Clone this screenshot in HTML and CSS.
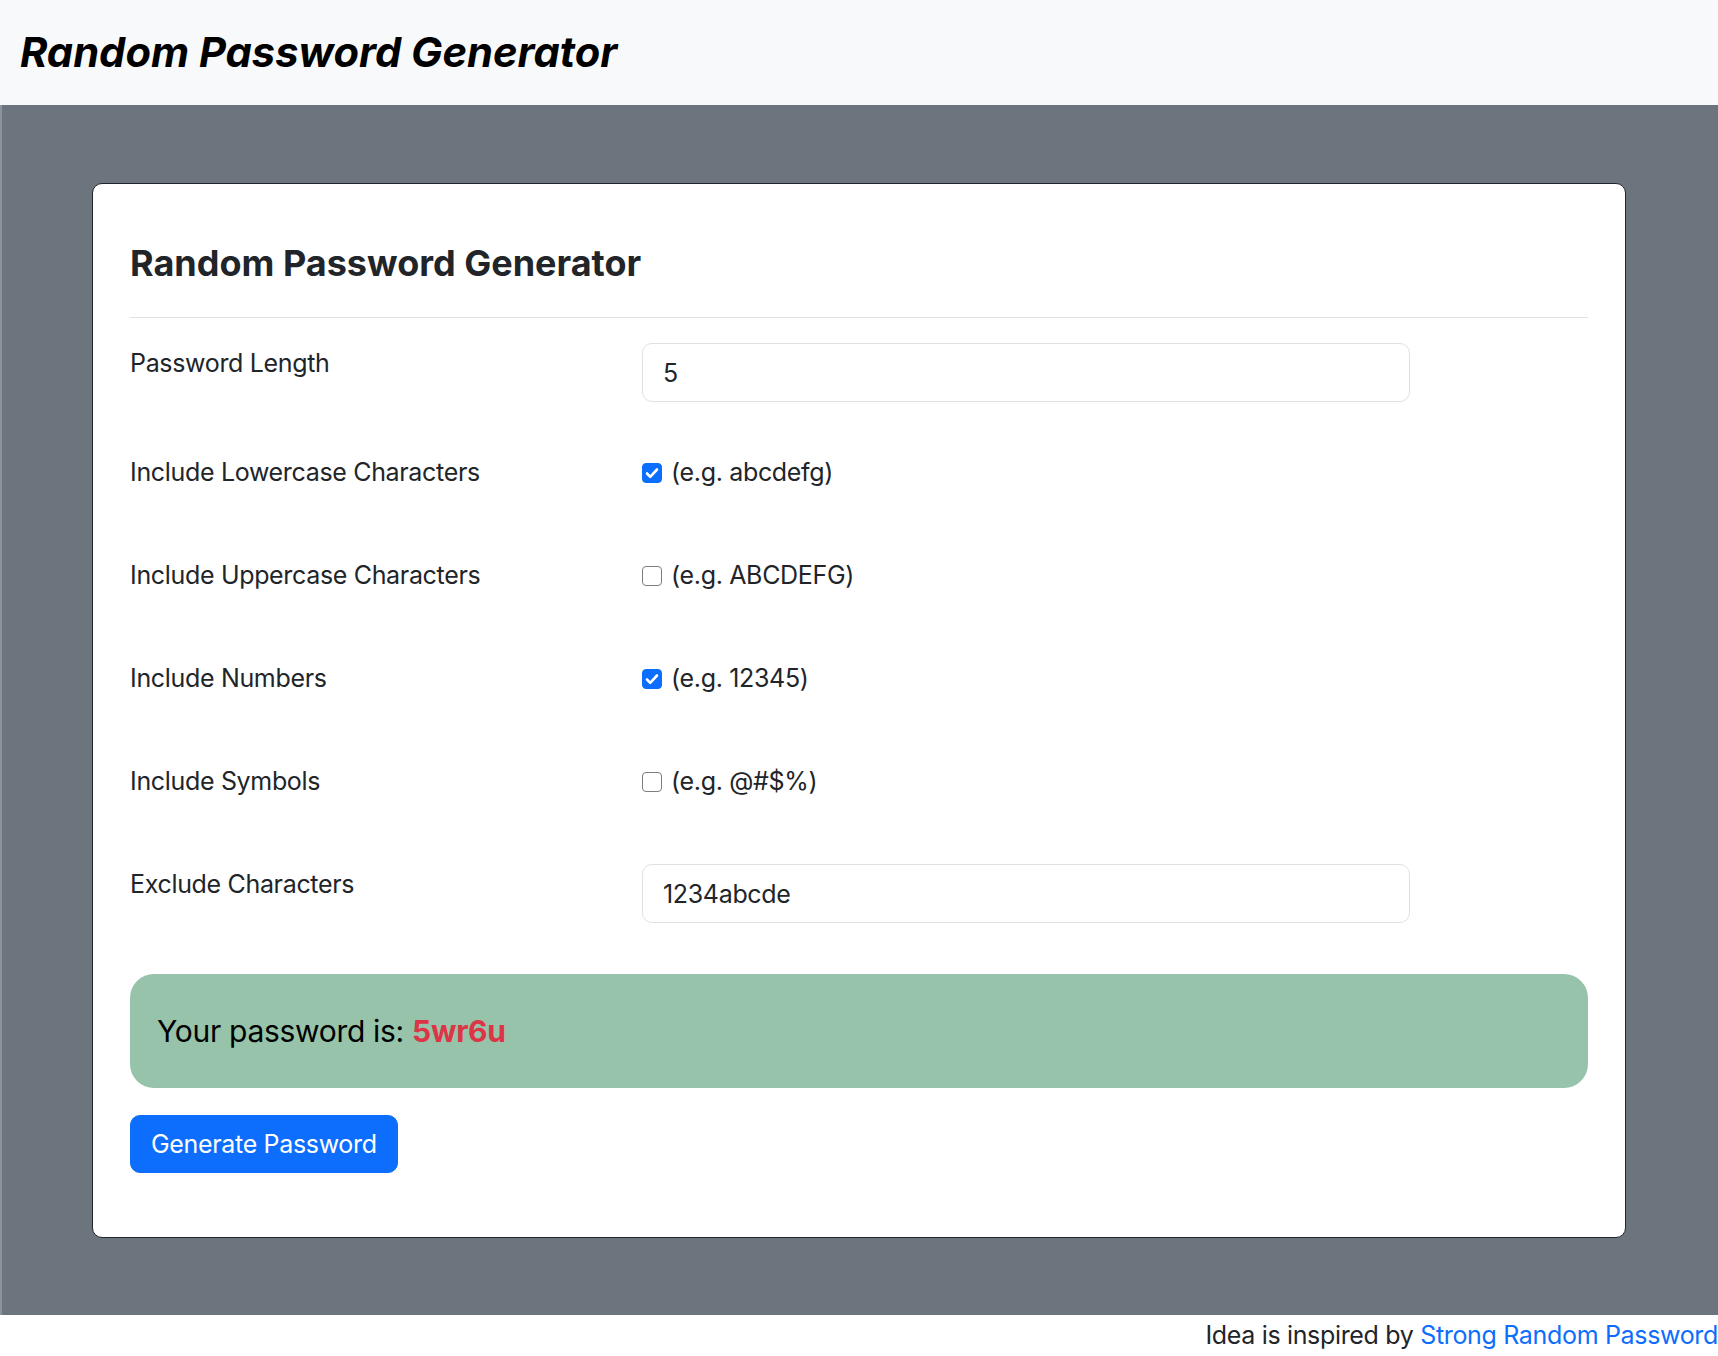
FILE: index.html
```html
<!DOCTYPE html>
<html lang="en">
<head>
<meta charset="utf-8">
<title>Random Password Generator</title>
<link rel="stylesheet" href="styles.css">
</head>
<body>
<header class="topbar">
  <h1 class="brand">Random Password Generator</h1>
</header>
<main class="stage">
  <section class="card">
    <h2 class="card-title">Random Password Generator</h2>
    <hr class="divider">
    <div class="field field-input">
      <label class="field-label" for="len">Password Length</label>
      <input class="text-input" id="len" type="text" value="5">
    </div>
    <div class="field field-check">
      <span class="field-label">Include Lowercase Characters</span>
      <label class="check"><input type="checkbox" checked><span>(e.g. abcdefg)</span></label>
    </div>
    <div class="field field-check">
      <span class="field-label">Include Uppercase Characters</span>
      <label class="check"><input type="checkbox"><span>(e.g. ABCDEFG)</span></label>
    </div>
    <div class="field field-check">
      <span class="field-label">Include Numbers</span>
      <label class="check"><input type="checkbox" checked><span>(e.g. 12345)</span></label>
    </div>
    <div class="field field-check">
      <span class="field-label">Include Symbols</span>
      <label class="check"><input type="checkbox"><span>(e.g. @#$%)</span></label>
    </div>
    <div class="field field-input field-last">
      <label class="field-label" for="excl">Exclude Characters</label>
      <input class="text-input" id="excl" type="text" value="1234abcde">
    </div>
    <div class="result">Your password is:&nbsp;<strong class="pw">5wr6u</strong></div>
    <button class="btn-generate" type="button">Generate Password</button>
  </section>
</main>
<footer class="credits">Idea is inspired by <a href="#">Strong Random Password</a></footer>
</body>
</html>
```

FILE: styles.css
```css
* { box-sizing: border-box; }

body {
  margin: 0;
  font-family: Inter, "Noto Sans", sans-serif;
  font-size: 25px;
  line-height: 1.5;
  letter-spacing: -0.33px;
  color: #212529;
  background: #fff;
}

.topbar {
  height: 105px;
  background: #f8f9fa;
  display: flex;
  align-items: center;
  padding-left: 20px;
}

.brand {
  margin: 0;
  font-size: 41.7px;
  font-weight: 700;
  font-style: italic;
  line-height: 1.2;
  letter-spacing: 0;
  color: #000;
}

.stage {
  background: #6c757d;
  border-left: 2px solid #8d9399;
  padding: 78px 92px 77px 90px;
}

.card {
  background: #fff;
  border: 1px solid #212529;
  border-radius: 10px;
  padding: 58px 37px 64px;
}

.card-title {
  margin: 0;
  font-size: 36px;
  font-weight: 700;
  line-height: 42px;
  letter-spacing: 0;
  color: #212529;
}

.divider {
  border: 0;
  border-top: 1px solid #dee2e6;
  margin: 33px 0 25px;
}

.field {
  display: grid;
  grid-template-columns: 512px 768px;
  align-items: start;
  margin-bottom: 50px;
}

.field-check { min-height: 53px; }
.field-last { margin-bottom: 51px; }

.field-label {
  padding-top: 2px;
  line-height: 37.5px;
}

.text-input {
  height: 59px;
  border: 1px solid #dee2e6;
  border-radius: 10px;
  padding: 0 20px;
  font-family: inherit;
  font-size: 25px;
  letter-spacing: inherit;
  color: #212529;
  background: #fff;
  outline: none;
}

.check {
  display: flex;
  align-items: center;
  gap: 9px;
  padding-top: 2px;
  line-height: 37.5px;
}

.check input {
  appearance: none;
  -webkit-appearance: none;
  width: 20px;
  height: 20px;
  margin: 0;
  border: 1px solid #7d7d7d;
  border-radius: 4px;
  background: #fff;
  flex: none;
}

.check input:checked {
  border-color: #0b6efd;
  background: #0b6efd url("data:image/svg+xml;utf8,<svg xmlns='http://www.w3.org/2000/svg' viewBox='0 0 20 20'><path d='M5 10.5l3.2 3.3L15 6.5' fill='none' stroke='white' stroke-width='2.6' stroke-linecap='round' stroke-linejoin='round'/></svg>") center / 20px 20px no-repeat;
}

.result {
  height: 114px;
  display: flex;
  align-items: center;
  padding: 0 27px;
  background: #96c3aa;
  border-radius: 24px;
  font-size: 30px;
  letter-spacing: -0.3px;
  color: #000;
  margin-bottom: 27px;
}

.pw {
  color: #dc3545;
  font-weight: 700;
}

.btn-generate {
  display: inline-block;
  background: #0d6efd;
  color: #fff;
  border: 1px solid #0d6efd;
  border-radius: 10px;
  font-family: inherit;
  font-size: 25px;
  letter-spacing: inherit;
  line-height: 36px;
  padding: 10px 20px;
  cursor: pointer;
}

.credits {
  text-align: right;
  font-size: 25px;
  line-height: 41px;
  height: 41px;
  color: #212529;
}

.credits a {
  color: #0d6efd;
  text-decoration: none;
}
```
